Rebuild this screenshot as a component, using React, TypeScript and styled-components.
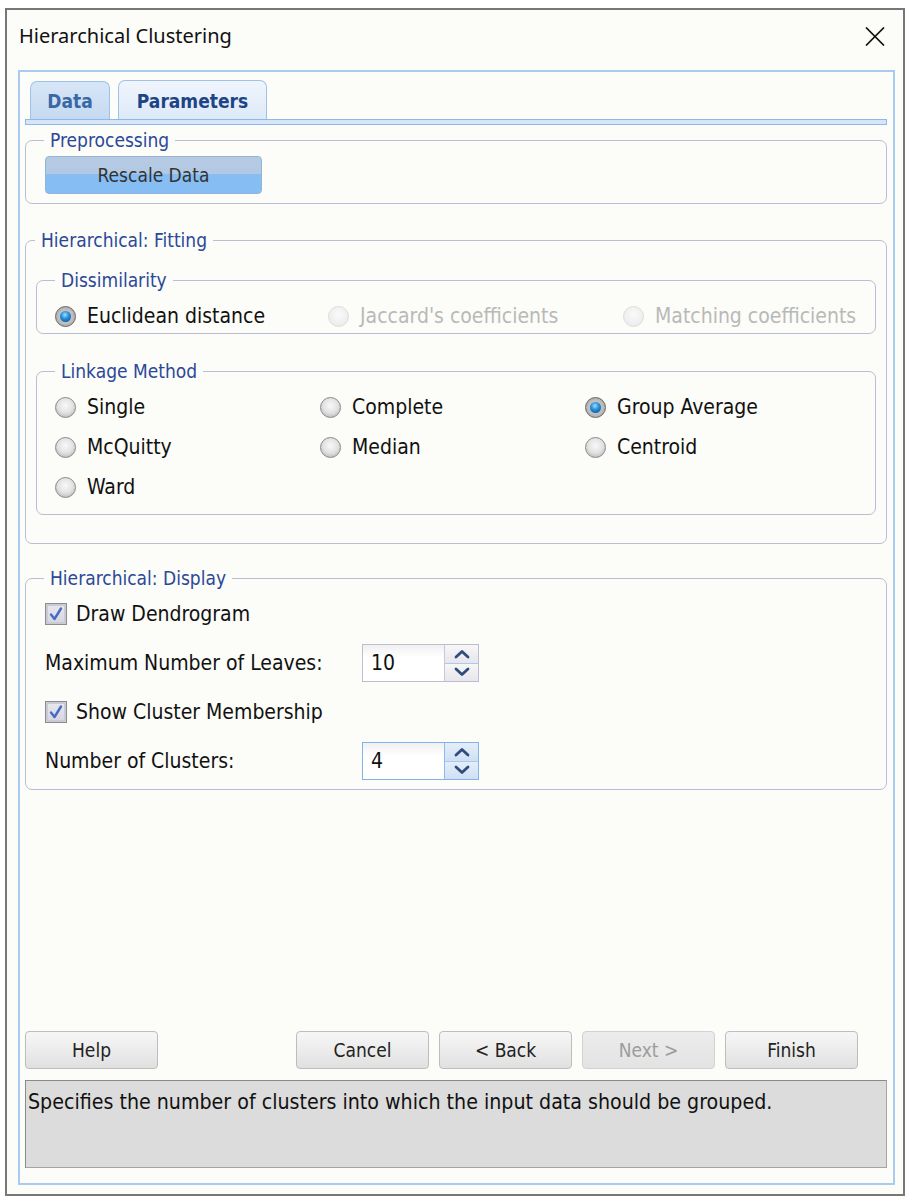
import React from "react";
import styled, { createGlobalStyle } from "styled-components";

const GlobalStyle = createGlobalStyle`
  html, body {
    margin: 0;
    padding: 0;
    background: #ffffff;
  }
  body {
    font-family: "DejaVu Sans Condensed", "DejaVu Sans", sans-serif;
    color: #111111;
  }
`;

const Dialog = styled.div`
  margin: 8px 0 0 5px;
  width: 900px;
  height: 1188px;
  box-sizing: border-box;
  border: 2px solid #777777;
  background: #fcfcf8;
  display: flex;
  flex-direction: column;
`;

const TitleBar = styled.div`
  height: 60px;
  box-sizing: border-box;
  padding: 12px 18px 0 12px;
  display: flex;
  justify-content: space-between;
  align-items: flex-start;
`;

const Title = styled.span`
  font-family: "Noto Sans", "Open Sans", sans-serif;
  font-size: 20px;
  line-height: 28px;
  color: #111;
`;

const CloseIcon = styled.svg`
  margin-top: 5px;
`;

const Panel = styled.div`
  flex: 1;
  margin: 0 8px 9px 11px;
  border: 2px solid #a9cbf0;
  padding: 8px 6px 15px 5px;
  display: flex;
  flex-direction: column;
`;

const TabRow = styled.div`
  display: flex;
  gap: 8px;
  padding-left: 5px;
  align-items: flex-end;
  margin-bottom: -1px;
`;

const Tab = styled.div<{ $active?: boolean; $width: number }>`
  width: ${(p) => p.$width}px;
  height: ${(p) => (p.$active ? 40 : 39)}px;
  box-sizing: border-box;
  display: flex;
  align-items: center;
  justify-content: center;
  border: 1px solid #9ec1ea;
  border-bottom: none;
  border-radius: 7px 7px 0 0;
  font-weight: bold;
  font-size: 19px;
  color: ${(p) => (p.$active ? "#1d4586" : "#3a68a6")};
  background: ${(p) =>
    p.$active
      ? "linear-gradient(#f0f5fc, #dde9f8)"
      : "linear-gradient(#d8e6f7, #c4d9f1)"};
`;

const TabStrip = styled.div`
  height: 6px;
  box-sizing: border-box;
  border: 1px solid #90b8e6;
  background: #d6e5f7;
`;

const Group = styled.fieldset<{ $top: number }>`
  margin: ${(p) => p.$top}px 0 0 0;
  padding: 0;
  min-width: 0;
  border: 1px solid #babdd5;
  border-radius: 7px;
`;

const Legend = styled.legend<{ $offset: number }>`
  margin-left: ${(p) => p.$offset}px;
  padding: 0 6px;
  font-size: 19px;
  line-height: 22px;
  color: #2b4898;
`;

const GroupBody = styled.div<{ $pad: string }>`
  padding: ${(p) => p.$pad};
  display: flex;
  flex-direction: column;
`;

const RescaleButton = styled.div`
  width: 217px;
  height: 38px;
  box-sizing: border-box;
  border: 1px solid #93b4da;
  border-radius: 4px;
  background: linear-gradient(#b7cae2 0%, #b2c8e3 46%, #86bdf3 47%, #86bdf3 100%);
  display: flex;
  align-items: center;
  justify-content: center;
  font-size: 19px;
  color: #333;
`;

const OptionRow = styled.div<{ $cols: string; $rowH: number }>`
  display: grid;
  grid-template-columns: ${(p) => p.$cols};
  grid-auto-rows: ${(p) => p.$rowH}px;
  align-items: center;
`;

const Option = styled.label<{ $disabled?: boolean }>`
  display: flex;
  align-items: center;
  gap: 11px;
  font-size: 21px;
  color: ${(p) => (p.$disabled ? "#b9b9b9" : "#111")};
  white-space: nowrap;
`;

const RadioDot = styled.span<{ $state: "on" | "off" | "disabled" }>`
  width: 21px;
  height: 21px;
  box-sizing: border-box;
  border-radius: 50%;
  flex: none;
  position: relative;
  border: 1px solid
    ${(p) =>
      p.$state === "disabled" ? "#dddddd" : p.$state === "on" ? "#666666" : "#8a8a8a"};
  background: ${(p) =>
    p.$state === "disabled"
      ? "radial-gradient(circle at 50% 40%, #fafafa 0, #efefef 60%, #e6e6e6 100%)"
      : p.$state === "on"
      ? "radial-gradient(circle, #d4d4d4 0, #bdbdbd 55%, #949494 100%)"
      : "radial-gradient(circle at 50% 40%, #f8f8f8 0, #e2e2e2 50%, #bdbdbd 82%, #a2a2a2 100%)"};

  &::after {
    content: "";
    display: ${(p) => (p.$state === "on" ? "block" : "none")};
    position: absolute;
    left: 4px;
    top: 4px;
    width: 11px;
    height: 11px;
    border-radius: 50%;
    background: radial-gradient(circle at 45% 35%, #9fe0ff 0, #2a90dc 40%, #0d5aa0 85%, #0a3f75 100%);
  }
`;

const DisplayBody = styled.div`
  padding: 6px 19px 9px 19px;
  display: flex;
  flex-direction: column;
  gap: 11px;
`;

const FormRow = styled.div`
  display: flex;
  align-items: center;
  height: 38px;
`;

const FieldLabel = styled.span`
  width: 317px;
  font-size: 21px;
`;

const CheckLabel = styled.span`
  margin-left: 9px;
  font-size: 21px;
`;

const CheckBox = styled.span`
  width: 22px;
  height: 22px;
  box-sizing: border-box;
  border: 1px solid #8c8c8c;
  background: #c9cad3;
  padding: 2px;
  display: flex;
`;

const CheckInner = styled.span`
  flex: 1;
  background: linear-gradient(#e6e6ee, #d6d7e2);
  display: flex;
  align-items: center;
  justify-content: center;
`;

const Spin = styled.div<{ $focus?: boolean }>`
  display: flex;
  width: 117px;
  height: 38px;
  box-sizing: border-box;
  border: 1px solid ${(p) => (p.$focus ? "#7fb3ea" : "#bdbdcf")};
  background: #fff;
`;

const SpinValue = styled.div`
  flex: 1;
  display: flex;
  align-items: center;
  padding-left: 8px;
  font-size: 21px;
  background: linear-gradient(#f0f0f0, #ffffff 35%);
`;

const SpinButtons = styled.div<{ $focus?: boolean }>`
  width: 33px;
  display: flex;
  flex-direction: column;
  border-left: 1px solid ${(p) => (p.$focus ? "#8fbcec" : "#c8c8d6")};
`;

const SpinButton = styled.div<{ $focus?: boolean }>`
  flex: 1;
  display: flex;
  align-items: center;
  justify-content: center;
  background: ${(p) =>
    p.$focus ? "linear-gradient(#e4eefa, #cfe0f4)" : "linear-gradient(#f7f7f7, #e6e6ec)"};
  & + & {
    border-top: 1px solid ${(p) => (p.$focus ? "#a9c9ee" : "#d0d0dc")};
  }
`;

const Spacer = styled.div`
  flex: 1;
`;

const ButtonRow = styled.div`
  display: flex;
  gap: 10px;
  padding-right: 29px;
`;

const WizardButton = styled.div<{ $disabled?: boolean; $push?: boolean }>`
  width: 133px;
  height: 38px;
  box-sizing: border-box;
  margin-right: ${(p) => (p.$push ? "auto" : "0")};
  border: 1px solid ${(p) => (p.$disabled ? "#d2d2d2" : "#bdbdbd")};
  border-radius: 4px;
  background: ${(p) =>
    p.$disabled
      ? "linear-gradient(#ececec, #e3e3e3)"
      : "linear-gradient(#f6f6f6, #ececec 50%, #e0e0e0)"};
  display: flex;
  align-items: center;
  justify-content: center;
  font-size: 19px;
  color: ${(p) => (p.$disabled ? "#9c9c9c" : "#222")};
`;

const StatusBox = styled.div`
  margin-top: 11px;
  height: 88px;
  box-sizing: border-box;
  border: 1px solid #a4a4a4;
  border-top-color: #8a8a8a;
  border-left-color: #8a8a8a;
  background: #dcdcdc;
  padding: 8px 2px;
  font-size: 21.2px;
  line-height: 26px;
  color: #111;
`;

type RadioState = "on" | "off" | "disabled";

const Radio = ({ label, state = "off" }: { label: string; state?: RadioState }) => (
  <Option $disabled={state === "disabled"}>
    <RadioDot $state={state} />
    {label}
  </Option>
);

const Check = ({ label }: { label: string }) => (
  <FormRow>
    <CheckBox>
      <CheckInner>
        <svg width="16" height="16" viewBox="0 0 16 16">
          <path d="M3 8.5 L6.5 13 L13 2.5" fill="none" stroke="#4a69c0" strokeWidth="2.4" strokeLinecap="round" strokeLinejoin="round" />
        </svg>
      </CheckInner>
    </CheckBox>
    <CheckLabel>{label}</CheckLabel>
  </FormRow>
);

const Chevron = ({ up }: { up?: boolean }) => (
  <svg width="16" height="10" viewBox="0 0 16 10">
    <path
      d={up ? "M2 8 L8 2.5 L14 8" : "M2 2 L8 7.5 L14 2"}
      fill="none"
      stroke="#2f4c7c"
      strokeWidth="2.8"
      strokeLinecap="round"
      strokeLinejoin="round"
    />
  </svg>
);

const Spinner = ({ value, focus }: { value: string; focus?: boolean }) => (
  <Spin $focus={focus}>
    <SpinValue>{value}</SpinValue>
    <SpinButtons $focus={focus}>
      <SpinButton $focus={focus}>
        <Chevron up />
      </SpinButton>
      <SpinButton $focus={focus}>
        <Chevron />
      </SpinButton>
    </SpinButtons>
  </Spin>
);

export default function App() {
  return (
    <>
      <GlobalStyle />
      <Dialog>
        <TitleBar>
          <Title>Hierarchical Clustering</Title>
          <CloseIcon width="20" height="19" viewBox="0 0 20 19">
            <path d="M1 0.5 L19 18.5 M19 0.5 L1 18.5" stroke="#111" strokeWidth="1.7" />
          </CloseIcon>
        </TitleBar>
        <Panel>
          <TabRow>
            <Tab $width={80}>Data</Tab>
            <Tab $width={149} $active>
              Parameters
            </Tab>
          </TabRow>
          <TabStrip />

          <Group $top={4}>
            <Legend $offset={18}>Preprocessing</Legend>
            <GroupBody $pad="5px 19px 9px 19px">
              <RescaleButton>Rescale Data</RescaleButton>
            </GroupBody>
          </Group>

          <Group $top={25}>
            <Legend $offset={9}>Hierarchical: Fitting</Legend>
            <GroupBody $pad="18px 10px 28px 10px">
              <Group $top={0}>
                <Legend $offset={18}>Dissimilarity</Legend>
                <GroupBody $pad="10px 0 2px 18px">
                  <OptionRow $cols="273px 295px 1fr" $rowH={30}>
                    <Radio label="Euclidean distance" state="on" />
                    <Radio label="Jaccard's coefficients" state="disabled" />
                    <Radio label="Matching coefficients" state="disabled" />
                  </OptionRow>
                </GroupBody>
              </Group>
              <Group $top={26}>
                <Legend $offset={18}>Linkage Method</Legend>
                <GroupBody $pad="5px 0 7px 18px">
                  <OptionRow $cols="265px 265px 1fr" $rowH={40}>
                    <Radio label="Single" />
                    <Radio label="Complete" />
                    <Radio label="Group Average" state="on" />
                    <Radio label="McQuitty" />
                    <Radio label="Median" />
                    <Radio label="Centroid" />
                    <Radio label="Ward" />
                  </OptionRow>
                </GroupBody>
              </Group>
            </GroupBody>
          </Group>

          <Group $top={23}>
            <Legend $offset={18}>Hierarchical: Display</Legend>
            <DisplayBody>
              <Check label="Draw Dendrogram" />
              <FormRow>
                <FieldLabel>Maximum Number of Leaves:</FieldLabel>
                <Spinner value="10" />
              </FormRow>
              <Check label="Show Cluster Membership" />
              <FormRow>
                <FieldLabel>Number of Clusters:</FieldLabel>
                <Spinner value="4" focus />
              </FormRow>
            </DisplayBody>
          </Group>

          <Spacer />

          <ButtonRow>
            <WizardButton $push>Help</WizardButton>
            <WizardButton>Cancel</WizardButton>
            <WizardButton>&lt; Back</WizardButton>
            <WizardButton $disabled>Next &gt;</WizardButton>
            <WizardButton>Finish</WizardButton>
          </ButtonRow>
          <StatusBox>
            Specifies the number of clusters into which the input data should be grouped.
          </StatusBox>
        </Panel>
      </Dialog>
    </>
  );
}
